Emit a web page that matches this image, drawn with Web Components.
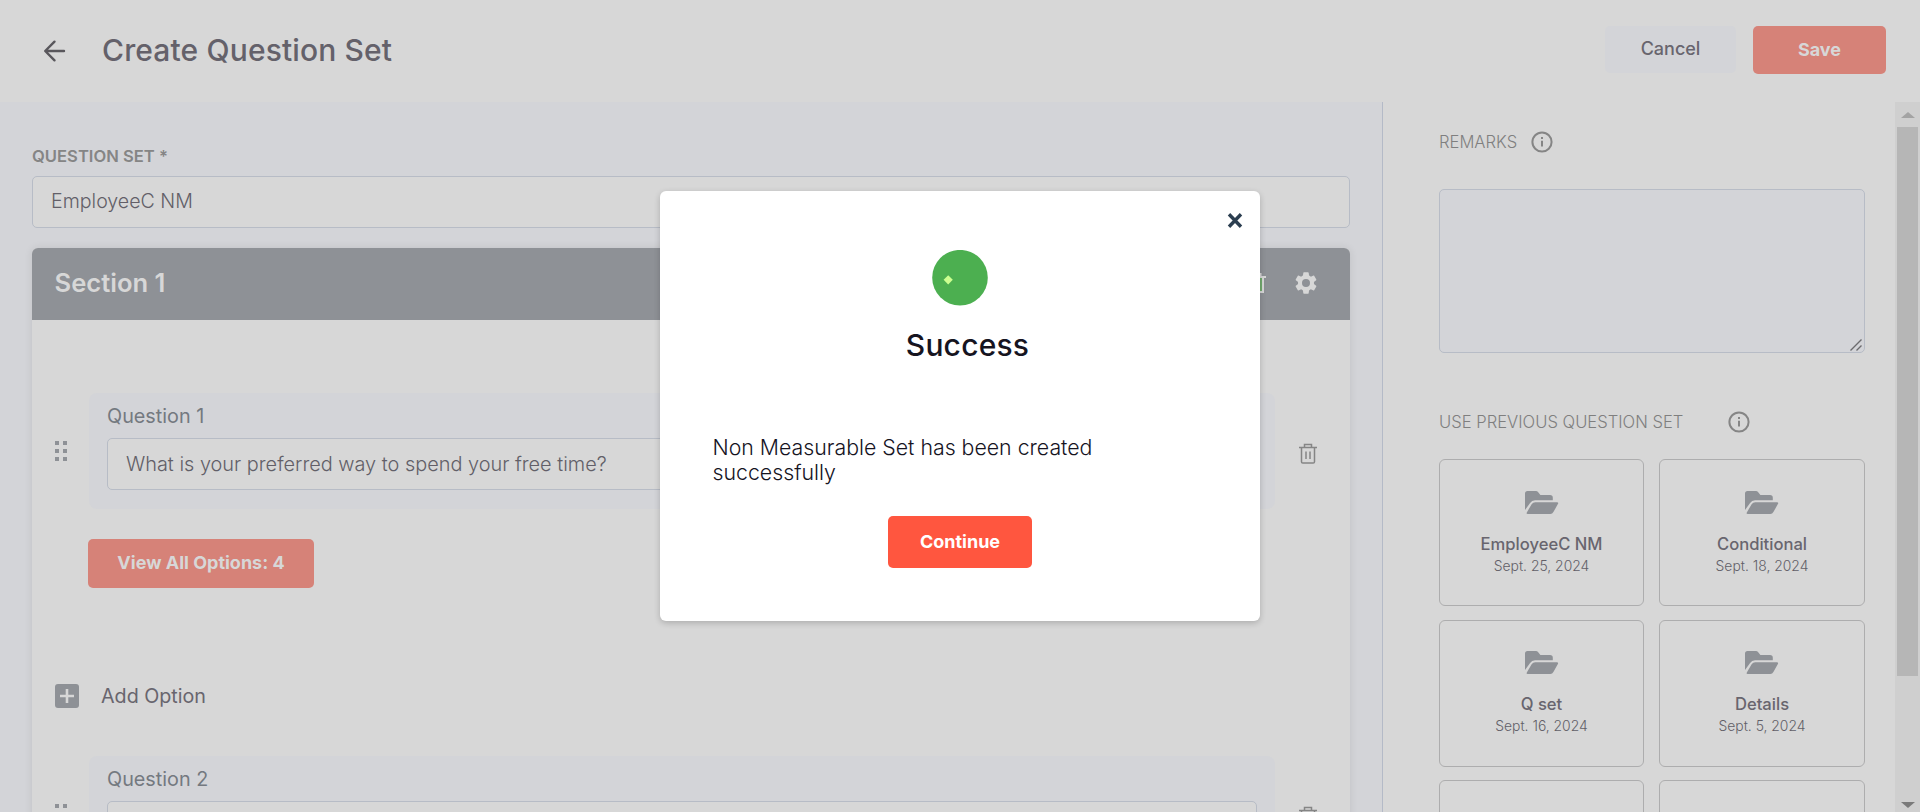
<!DOCTYPE html>
<html lang="en">
<head>
<meta charset="utf-8">
<title>Create Question Set</title>
<style>
html,body{margin:0;height:100%;overflow:hidden;background:#d7d7d7;font-family:Inter,sans-serif;color:#68656e}
</style>
</head>
<body>
<question-app></question-app>
<script>
const define = (name, html) => {
  const t = document.createElement('template');
  t.innerHTML = html;
  customElements.define(name, class extends HTMLElement {
    constructor() {
      super();
      this.attachShadow({mode: 'open'}).append(t.content.cloneNode(true));
    }
  });
};

define('info-icon', `<style>:host{display:block;width:22px;height:22px}svg{display:block}</style>
<svg width="22" height="22" viewBox="0 0 22 22" fill="none" stroke="#858585"><circle cx="11" cy="11" r="9.6" stroke-width="2"/><path d="M11 9.800v5.700" stroke-width="2"/><path d="M11 6v2" stroke-width="2"/></svg>`);

define('trash-icon', `<style>:host{display:block;width:18px;height:21px}svg{display:block}</style>
<svg width="18" height="21" viewBox="0 0 18 21" fill="none" stroke="#858585" stroke-width="1.5"><path d="M0 4.5h18M5.5 4.5V1.5h7v3M2.5 4.5v14.2q0 1.3 1.3 1.3h10.4q1.3 0 1.3-1.3V4.5M7 8.5v7.5M11 8.5v7.5"/></svg>`);

define('drag-handle', `<style>:host{display:grid;grid-template-columns:4px 4px;gap:4px;width:12px}i{width:4px;height:4px;background:#8e9196}</style><i></i><i></i><i></i><i></i><i></i><i></i>`);

define('text-box', `<style>:host{display:flex;align-items:center;box-sizing:border-box;height:52px;padding:0 18px;border:1px solid #b7bcc6;border-radius:5px;background:#d7d7d7;font-size:19.9px;font-weight:300;white-space:nowrap;color:#625f68}
</style><span><slot></slot></span>`);

define('app-button', `<style>:host{display:flex;align-items:center;justify-content:center;box-sizing:border-box;height:48px;padding-bottom:2px;border-radius:5px;background:#d68278;color:#d7d7d7;font-size:18px;font-weight:700;white-space:nowrap}
:host([plain]){background:#d3d4d8;color:#68656e;font-weight:500}
:host([primary]){background:#ff563f;color:#fff;padding-bottom:1px}</style><slot></slot>`);

define('page-header', `<style>:host{display:flex;align-items:center;box-sizing:border-box;height:102px;padding:0 34px 2px 43px}
svg{display:block;margin-top:2px}h1{margin:0 auto 0 36px;font-size:30px;font-weight:500;line-height:36px;letter-spacing:.14px;color:#64616a}
.b{display:flex;gap:17px}.c{width:131px;height:47px}.s{width:133px}</style>
<svg width="23" height="22" viewBox="0 0 23 22" fill="none" stroke="#59575c" stroke-width="2.4" stroke-linecap="round" stroke-linejoin="round"><path d="M21 11H2.5M11.5 1.7 2.2 11l9.3 9.3"/></svg>
<h1><slot></slot></h1><div class="b"><app-button class="c" plain>Cancel</app-button><app-button class="s">Save</app-button></div>`);

define('question-row', `<style>:host{display:grid;grid-template-columns:34px 1186px 22px 21px;align-items:center;height:116px;padding-left:23px}
.q{align-self:stretch;box-sizing:border-box;height:116px;padding:11px 18px 0;border-radius:8px;background:#d3d4d8}
.l{height:24px;line-height:24px;margin-bottom:10px;font-size:19.8px;color:#747980}
trash-icon{grid-column:4;margin-top:4px;margin-left:2px}</style>
<drag-handle></drag-handle><div class="q"><div class="l"><slot name="label"></slot></div><text-box><slot></slot></text-box></div><trash-icon></trash-icon>`);

define('section-card', `<style>:host{display:block;width:1318px;height:800px;border-radius:6px 6px 0 0;background:#d7d7d7;box-shadow:0 0 8px rgba(0,0,0,.09)}
header{display:flex;align-items:center;height:72px;box-sizing:border-box;padding:0 32px 3px 22.500px;border-radius:6px 6px 0 0;background:#8e9196;color:#d7d7d7}
h2{margin:0 auto 0 0;font-size:25.6px;font-weight:600}
svg{display:block}.t{margin-right:28px}
.body{padding-top:73px}</style>
<header><h2><slot name="title"></slot></h2>
<svg class="t" width="18" height="22" viewBox="0 0 18 22" fill="#72aa6e" stroke="#d7d7d7" stroke-width="2"><path d="M3 5v15h12V5"/><path d="M0 5h18M5.5 5V2h7v3M7 9v7M11 9v7"/></svg>
<svg class="g" width="24" height="24" viewBox="1.2 1.2 21.6 21.6" fill="#d7d7d7"><path d="M19.14 12.94c.04-.3.06-.61.06-.94 0-.32-.02-.64-.07-.94l2.03-1.58a.49.49 0 0 0 .12-.61l-1.92-3.32a.488.488 0 0 0-.59-.22l-2.39.96c-.5-.38-1.03-.7-1.62-.94l-.36-2.54a.484.484 0 0 0-.48-.41h-3.84c-.24 0-.43.17-.47.41l-.36 2.54c-.59.24-1.13.57-1.62.94l-2.39-.96c-.22-.08-.47 0-.59.22L2.74 8.87c-.12.21-.08.47.12.61l2.03 1.58c-.05.3-.09.63-.09.94s.02.64.07.94l-2.03 1.58a.49.49 0 0 0-.12.61l1.92 3.32c.12.22.37.29.59.22l2.39-.96c.5.38 1.03.7 1.62.94l.36 2.54c.05.24.24.41.48.41h3.84c.24 0 .44-.17.47-.41l.36-2.54c.59-.24 1.13-.56 1.62-.94l2.39.96c.22.08.47 0 .59-.22l1.92-3.32c.12-.22.07-.47-.12-.61l-2.01-1.58zM12 15.6A3.6 3.6 0 1 1 12 8.4a3.6 3.6 0 0 1 0 7.2z"/></svg>
</header><div class="body"><slot></slot></div>`);

define('add-option', `<style>:host{display:flex;align-items:center;height:24px;gap:22px;padding-left:23px;font-size:19.7px;color:#68656e}svg{display:block}</style>
<svg width="24" height="24" viewBox="0 0 24 24"><rect width="24" height="24" rx="3" fill="#8e9196"/><path d="M12 5v14M5 12h14" stroke="#d7d7d7" stroke-width="2.6"/></svg><span><slot></slot></span>`);

define('set-card', `<style>:host{display:flex;flex-direction:column;align-items:center;box-sizing:border-box;height:147px;padding-top:30.700px;border:1px solid #adadae;border-radius:6px;text-align:center}
svg{display:block;margin-bottom:19px}b{font-size:16.600px;font-weight:500;line-height:23px;color:#68656e}span{font-size:13.900px;font-weight:300;line-height:20px;color:#625f68}</style>
<svg width="34" height="23" viewBox="0 0 34 23" fill="#8e9196"><path d="M0 19V2.5Q0 0 2.5 0H11q1.2 0 2 .9L15.4 4H25q2.8 0 2.8 2.8v2.4H10q-3.3 0-4.9 2.7z"/><path d="M10.3 11.2H32q1.8 0 1 1.6l-4.6 8.3q-1 1.9-3 1.9H2.8q-1.8 0-1-1.6l5-8.4q1.2-1.8 3.500-1.800z"/></svg>
<b><slot></slot></b><span><slot name="date"></slot></span>`);

define('side-panel', `<style>:host{display:block;width:537px;box-sizing:border-box;height:710px;border-left:1px solid #b4bac7;overflow:hidden}
.in{padding:28px 0 0 56px}
.h{display:flex;align-items:center;height:24px;font-size:16.6px;font-weight:350;line-height:24px;color:#7f7f7f}
.h info-icon{margin-left:13.500px}.h.u{margin-top:57px}.h.u info-icon{margin-left:45px}
.ta{position:relative;width:426px;height:164px;box-sizing:border-box;margin-top:35px;border:1px solid #b7bcc6;border-radius:5px;background:#d3d4d8}
.ta svg{position:absolute;right:2px;bottom:1px}
.grid{display:grid;grid-template-columns:205px 206px;gap:13.450px 15px;margin-top:25.300px}</style>
<div class="in"><div class="h">REMARKS<info-icon></info-icon></div>
<div class="ta"><svg width="12" height="12" viewBox="0 0 12 12" stroke="#6b6b6d" stroke-width="1.4"><path d="M.5 11.500 11.500.5M6.500 11.500l5-5"/></svg></div>
<div class="h u">USE PREVIOUS QUESTION SET<info-icon></info-icon></div>
<div class="grid"><slot></slot></div></div>`);

define('scroll-bar', `<style>:host{display:flex;flex-direction:column;align-items:center;width:25px;height:710px;background:#cfcfcf}
.u,.d{border:7px solid transparent;border-width:0 7px 6px;border-bottom-color:#a3a3a3;margin-top:10px}
.d{border-width:6px 7px 0;border-top-color:#7a7a7a;margin:auto 0 4px}
.t{width:21px;height:549px;margin-top:9px;background:#b6b6b6}</style><i class="u"></i><div class="t"></div><i class="d"></i>`);

define('success-dialog', `<style>:host{position:absolute;left:660px;top:191px;display:flex;flex-direction:column;align-items:center;box-sizing:border-box;width:600px;height:430px;padding-top:59px;border-radius:6px;background:#fff;box-shadow:0 2px 6px rgba(0,0,0,.2);color:#16141f}
.x{position:absolute;right:17px;top:21px}svg{display:block}
h2{margin:21px 0 0 15px;font-size:30px;font-weight:500;line-height:36px;letter-spacing:.2px}
p{width:394px;margin:72px 0 0;align-self:flex-start;padding-left:52.500px;font-size:21.300px;font-weight:300;line-height:25px}
app-button{width:144px;height:52px;margin-top:31px}</style>
<svg class="x" width="16" height="17" viewBox="0 0 16 17" stroke="#2c3e50" stroke-width="3.400"><path d="M2 2.300 14 14.700M14 2.300 2 14.700"/></svg>
<svg width="56" height="56" viewBox="0 0 56 56"><circle cx="28" cy="27.700" r="27.800" fill="#4caf50"/><path d="M16.200 25.200l4.600 4.600-4.600 4.600-4.600-4.600z" fill="#ccff90"/></svg>
<h2>Success</h2><p><slot></slot></p><app-button primary>Continue</app-button>`);

define('question-app', `<style>:host{display:block;width:1920px;height:812px;overflow:hidden;position:relative}
main{display:flex;height:710px}
.left{width:1382px;flex:none;box-sizing:border-box;height:710px;overflow:hidden;padding:42px 32px 0;background:#d3d4d8}
label{display:block;height:24px;line-height:24px;margin-bottom:8px;font-size:16.6px;font-weight:600;color:#858585}
.name{width:1318px;margin-bottom:20px;padding-bottom:2px;font-size:19.600px}
.v{width:226px;height:49px;margin:30px 0 96px 56px}
add-option{margin-bottom:48px}
side-panel{width:513px;flex:none}</style>
<page-header>Create Question Set</page-header>
<main><div class="left"><label>QUESTION SET *</label><text-box class="name">EmployeeC NM</text-box>
<section-card><span slot="title">Section 1</span>
<question-row><span slot="label">Question 1</span>What is your preferred way to spend your free time?</question-row>
<app-button class="v">View All Options: 4</app-button>
<add-option>Add Option</add-option>
<question-row><span slot="label">Question 2</span></question-row></section-card></div>
<side-panel><set-card>EmployeeC NM<span slot="date">Sept. 25, 2024</span></set-card><set-card>Conditional<span slot="date">Sept. 18, 2024</span></set-card><set-card>Q set<span slot="date">Sept. 16, 2024</span></set-card><set-card>Details<span slot="date">Sept. 5, 2024</span></set-card><set-card></set-card><set-card></set-card></side-panel><scroll-bar></scroll-bar></main>
<success-dialog>Non Measurable Set has been created successfully</success-dialog>`);
</script>
</body>
</html>
